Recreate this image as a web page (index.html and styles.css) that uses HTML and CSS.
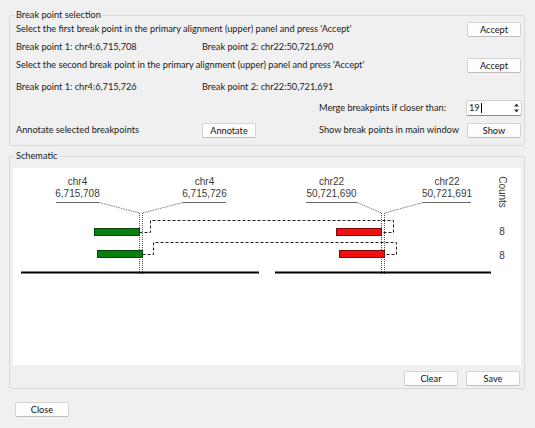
FILE: index.html
```html
<!DOCTYPE html>
<html>
<head>
<meta charset="utf-8">
<link rel="stylesheet" href="styles.css">
</head>
<body>
<div class="dialog">
  <fieldset class="group sel">
    <legend>Break point selection</legend>
    <div class="grid">
      <div class="r1 c12">Select the first break point in the primary alignment (upper) panel and press 'Accept'</div>
      <button class="btn r1 c4">Accept</button>
      <div class="r2 c1">Break point 1: chr4:6,715,708</div>
      <div class="r2 c2">Break point 2: chr22:50,721,690</div>
      <div class="r3 c12">Select the second break point in the primary alignment (upper) panel and press 'Accept'</div>
      <button class="btn r3 c4">Accept</button>
      <div class="r4 c1">Break point 1: chr4:6,715,726</div>
      <div class="r4 c2">Break point 2: chr22:50,721,691</div>
      <div class="r5 c3">Merge breakpints if closer than:</div>
      <div class="spin r5 c4"><span class="val">19<span class="caret"></span></span><span class="arrows"><svg width="7" height="12" viewBox="0 0 7 12"><path d="M1 4.5 L3.5 1.5 L6 4.5 Z" fill="#333"/><path d="M1 7.5 L3.5 10.5 L6 7.5 Z" fill="#333"/></svg></span></div>
      <div class="r6 c1">Annotate selected breakpoints</div>
      <button class="btn r6 c2 annot">Annotate</button>
      <div class="r6 c3">Show break points in main window</div>
      <button class="btn r6 c4">Show</button>
    </div>
  </fieldset>
  <fieldset class="group schem">
    <legend>Schematic</legend>
    <div class="canvas">
      <svg width="508" height="197" viewBox="0 0 508 197">
        <g font-family="Liberation Sans, Arial, sans-serif" font-size="10" fill="#3a3a3a" text-anchor="middle">
          <text x="64.5" y="17">chr4</text>
          <text x="64.5" y="28.7">6,715,708</text>
          <text x="191.5" y="17">chr4</text>
          <text x="191.5" y="28.7">6,715,726</text>
          <text x="318.5" y="17">chr22</text>
          <text x="318.5" y="28.7">50,721,690</text>
          <text x="434" y="17">chr22</text>
          <text x="434" y="28.7">50,721,691</text>
          <text x="489" y="67">8</text>
          <text x="489" y="90.5">8</text>
          <text transform="translate(486,24) rotate(90)" y="0">Counts</text>
        </g>
        <g stroke="#6a6a6a" stroke-width="1" fill="none">
          <path d="M43 34.5 H86 M170 34.5 H213 M293 34.5 H344 M410 34.5 H458"/>
        </g>
        <g stroke="#777" stroke-width="1" fill="none" stroke-dasharray="1.5 1">
          <path d="M86 34.5 L126.5 45 M170 34.5 L129.5 45 M344 34.5 L368.5 45 M410 34.5 L371.5 45"/>
        </g>
        <g stroke="#555" stroke-width="1" fill="none" stroke-dasharray="1 1">
          <path d="M126.5 45 V107 M129.5 45 V107 M368.5 45 V107 M371.5 45 V107"/>
        </g>
        <rect x="81.5" y="60.5" width="45" height="7" fill="#0a8010" stroke="#063f08" stroke-width="1"/>
        <rect x="84.5" y="82.5" width="45" height="7" fill="#0a8010" stroke="#063f08" stroke-width="1"/>
        <rect x="323.5" y="60.5" width="45" height="7" fill="#f20f0f" stroke="#7a0808" stroke-width="1"/>
        <rect x="326.5" y="82.5" width="45" height="7" fill="#f20f0f" stroke="#7a0808" stroke-width="1"/>
        <g stroke="#222" stroke-width="1" fill="none" stroke-dasharray="3 2">
          <path d="M126.5 64.5 H137.5 V52.5 H380.5 V64.5 H369"/>
          <path d="M129.5 86.5 H140.5 V74.5 H383.5 V86.5 H372"/>
        </g>
        <rect x="8" y="103.5" width="238" height="2" fill="#000"/>
        <rect x="262" y="103.5" width="216" height="2" fill="#000"/>
      </svg>
    </div>
    <div class="actions">
      <button class="btn">Clear</button>
      <button class="btn">Save</button>
    </div>
  </fieldset>
  <div class="footer">
    <button class="btn">Close</button>
  </div>
</div>
</body>
</html>
```
FILE: styles.css
```css
* { box-sizing: border-box; }
html, body {
  margin: 0;
  padding: 0;
  background: #f0f0f0;
  width: 535px;
  height: 428px;
  overflow: hidden;
}
body {
  font-family: Lato, "Noto Sans", sans-serif;
  font-size: 9.2px;
  color: #1a1a1a;
}
.dialog {
  padding: 9px 10px 0 9px;
}
.group {
  margin: 0;
  border: 1px solid #dadada;
  border-radius: 2px;
  padding: 0;
  min-width: 0;
}
.group legend {
  padding: 0 1px;
  margin-left: 5px;
  line-height: 12px;
  height: 12px;
}
.sel {
  height: 137px;
}
.grid {
  display: grid;
  grid-template-columns: 186px 117px 1fr 56px;
  grid-template-rows: 18px 18px 22px 21px 22px 16px;
  padding: 0 3px 0 6px;
}
.grid > div {
  line-height: 16px;
  height: 16px;
  white-space: nowrap;
}
.r1 { grid-row: 1; }
.r2 { grid-row: 2; }
.r3 { grid-row: 3; }
.r4 { grid-row: 4; }
.r5 { grid-row: 5; }
.r6 { grid-row: 6; }
.c12 { grid-column: 1 / 4; }
.c1 { grid-column: 1; }
.c2 { grid-column: 2; }
.c3 { grid-column: 3; }
.c4 { grid-column: 4; justify-self: end; }
.btn {
  font: inherit;
  color: #111;
  background: #fdfdfd;
  border: 1px solid #d3d3d3;
  border-bottom-color: #bdbdbd;
  border-radius: 2px;
  width: 54px;
  height: 15px;
  padding: 0;
  line-height: 13px;
  text-align: center;
}
.grid .btn { align-self: start; margin-top: 1px; }
.annot { justify-self: start; }
.spin {
  width: 56px;
  display: flex;
  align-items: center;
  justify-content: space-between;
  background: #fff;
  border: 1px solid #cfcfcf;
  border-bottom-color: #8a8a8a;
  border-radius: 2px;
  margin-right: -1px;
}
.spin.c4 { height: 16px; line-height: 14px; }
.val { padding-left: 2px; display: flex; align-items: center; }
.caret {
  display: inline-block;
  width: 1px;
  height: 10px;
  background: #000;
  margin-left: 1px;
}
.arrows { display: flex; align-items: center; padding-right: 1px; }
.schem {
  margin-top: 4px;
  height: 239px;
}
.canvas {
  margin: 6px 3px 0 3px;
  height: 197px;
  background: #fff;
}
.canvas svg { display: block; }
.actions {
  display: flex;
  justify-content: flex-end;
  gap: 8px;
  padding: 6px 4px 0 0;
}
.footer {
  padding: 13px 0 0 6px;
}
```
